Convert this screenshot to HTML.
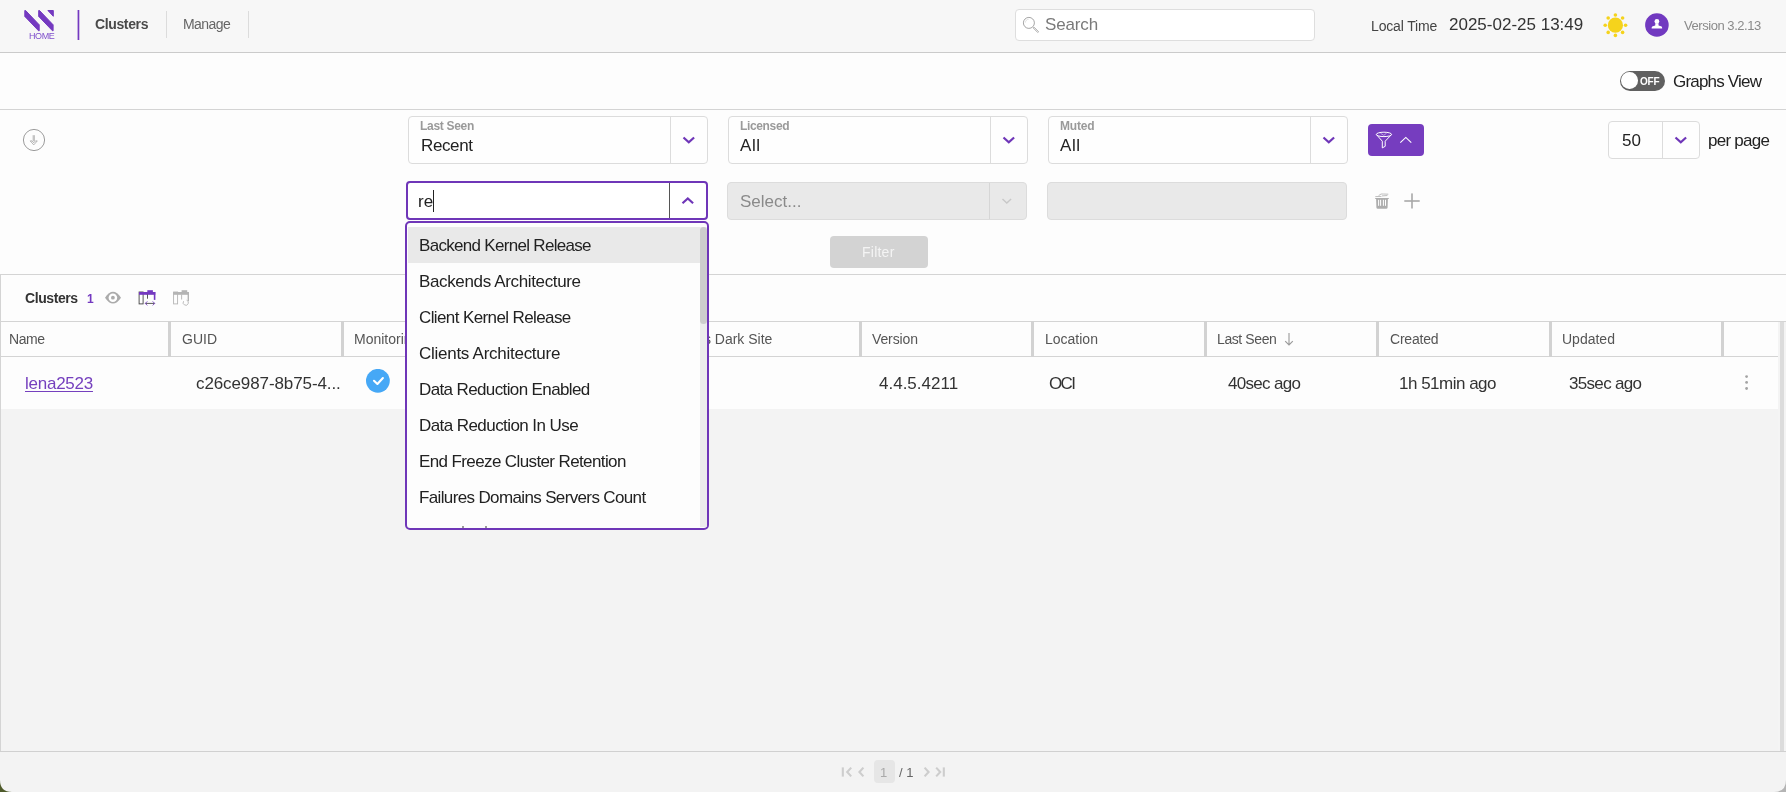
<!DOCTYPE html>
<html><head><meta charset="utf-8">
<style>
*{box-sizing:border-box;margin:0;padding:0}
html,body{width:1786px;height:792px;overflow:hidden;background:#fdfdfd;font-family:"Liberation Sans",sans-serif;color:#222}
.a{position:absolute}
.t{position:absolute;white-space:nowrap;line-height:1;will-change:transform}
#hdr{left:0;top:0;width:1786px;height:53px;background:#f7f7f7;border-bottom:1px solid #cbcbcb}
.hl{height:1px;background:#d4d4d4;left:0;width:1786px}
.sel{border:1px solid #dcdcdc;border-radius:4px;background:#fefefe}
.div{width:1px;background:#dcdcdc}
.lbl{font-weight:bold;color:#9a9a9a}
.opt{left:419px;font-size:17px;color:#222;letter-spacing:-0.68px}
.th{font-size:14px;color:#555;top:332px !important}
.td{font-size:17px;color:#333}
.sep{top:321px;height:36px;width:3px;background:#d2d2d2}
</style></head>
<body>
<!-- HEADER -->
<div id="hdr" class="a"></div>
<svg class="a" style="left:0;top:0" width="100" height="52">
  <g fill="#7439c0" stroke="#7439c0" stroke-width="1" stroke-linejoin="round">
  <polygon points="24.8,10.5 25.6,10.5 39.2,24.8 39.2,30.8 38.6,30.8 24.8,16.4"/>
  <polygon points="38.7,10.5 39.5,10.5 53.1,24.8 53.1,30.8 52.5,30.8 38.7,16.4"/>
  <polygon points="47.9,10.5 53.3,10.5 53.3,16.3"/>
  </g>
  <rect x="77.6" y="10" width="1.7" height="30" fill="#7439c0"/>
</svg>
<div class="t" style="left:29px;top:32px;font-size:9px;color:#7f4fcc;letter-spacing:-0.4px">HOME</div>
<div class="t" style="left:95px;top:17px;font-size:14px;font-weight:bold;color:#4a4a4a;letter-spacing:-0.37px">Clusters</div>
<div class="a" style="left:166px;top:11px;width:1px;height:27px;background:#dcdcdc"></div>
<div class="t" style="left:183px;top:17px;font-size:14px;color:#666;letter-spacing:-0.58px">Manage</div>
<div class="a" style="left:248px;top:11px;width:1px;height:27px;background:#dcdcdc"></div>

<div class="a" style="left:1015px;top:9px;width:300px;height:32px;background:#fff;border:1px solid #dedede;border-radius:4px"></div>
<svg class="a" style="left:1022px;top:16px" width="18" height="18" viewBox="0 0 18 18">
  <circle cx="6.9" cy="6.9" r="5.5" fill="none" stroke="#a6a6a6" stroke-width="1"/>
  <path d="M3.4 6.4 A3.6 3.6 0 0 1 6.6 3.2" fill="none" stroke="#c4c4c4" stroke-width="0.8" stroke-dasharray="1 0.8"/>
  <path d="M11.2 11.9 L12 11.1 L16.4 15.5 Q16.6 16.2 15.7 16.5 Z" fill="none" stroke="#a6a6a6" stroke-width="0.9" stroke-linejoin="round"/>
</svg>
<div class="t" style="left:1045px;top:16px;font-size:17px;color:#7a7a7a;letter-spacing:-0.15px">Search</div>

<div class="t" style="left:1371px;top:19px;font-size:14px;color:#444;letter-spacing:-0.15px">Local Time</div>
<div class="t" style="left:1449px;top:16px;font-size:17px;color:#333">2025-02-25 13:49</div>

<svg class="a" style="left:1600px;top:10px" width="32" height="32" viewBox="0 0 32 32">
  <circle cx="15.4" cy="15.2" r="7.6" fill="#f5d31c"/>
  <g fill="#f5d31c">
   <circle cx="15.4" cy="5" r="1.8"/><circle cx="15.4" cy="25.4" r="1.8"/>
   <circle cx="5.2" cy="15.2" r="1.8"/><circle cx="25.6" cy="15.2" r="1.8"/>
   <circle cx="8.2" cy="8" r="1.8"/><circle cx="22.6" cy="8" r="1.8"/>
   <circle cx="8.2" cy="22.4" r="1.8"/><circle cx="22.6" cy="22.4" r="1.8"/>
  </g>
</svg>
<svg class="a" style="left:1641px;top:9px" width="32" height="32" viewBox="0 0 32 32">
  <circle cx="15.9" cy="16" r="11.8" fill="#7139c0"/>
  <circle cx="15.9" cy="12.4" r="2.4" fill="#fff"/>
  <path d="M14.4 14.2 L17.4 14.2 L17.6 16.6 L20.6 17.6 Q21.2 18 21.2 19.6 L10.6 19.6 Q10.6 18 11.2 17.6 L14.2 16.6 Z" fill="#fff"/>
</svg>
<div class="t" style="left:1684px;top:19px;font-size:13px;color:#8a8a8a;letter-spacing:-0.45px">Version 3.2.13</div>

<!-- TOOLBAR -->
<div class="a" style="left:1620px;top:71px;width:45px;height:20px;border-radius:10px;background:#606060"></div>
<div class="a" style="left:1621.4px;top:72.4px;width:16.6px;height:16.6px;border-radius:50%;background:#fff"></div>
<div class="t" style="left:1640px;top:77px;font-size:10px;font-weight:bold;color:#fff;letter-spacing:-0.2px">OFF</div>
<div class="t" style="left:1673px;top:73px;font-size:17px;color:#222;letter-spacing:-0.8px">Graphs View</div>
<div class="a hl" style="top:109px"></div>

<!-- FILTERS -->

<!-- download icon -->
<svg class="a" style="left:22px;top:128px" width="24" height="24" viewBox="0 0 24 24">
  <circle cx="12" cy="12" r="10.6" fill="none" stroke="#9c9c9c" stroke-width="1"/>
  <rect x="10.6" y="7.2" width="2.4" height="6" fill="#c4c4c4"/><path d="M8.2 12.9 L11.75 16.9 L15.3 12.9 L13.5 12.9 L11.75 14.8 L10 12.9 Z" fill="none" stroke="#a4a4a4" stroke-width="0.8" stroke-linejoin="round"/>
</svg>
<!-- Last Seen select -->
<div class="a sel" style="left:408px;top:116px;width:300px;height:48px"></div>
<div class="a div" style="left:670px;top:117px;height:46px"></div>
<div class="t lbl" style="left:420px;top:120px;font-size:12px;letter-spacing:-0.3px">Last Seen</div>
<div class="t" style="left:421px;top:137px;font-size:17px;color:#222;letter-spacing:-0.38px">Recent</div>
<svg class="a" style="left:680px;top:134px" width="18" height="12" viewBox="0 0 18 12"><path d="M3.5 3.5 L8.8 8.3 L14.1 3.5" fill="none" stroke="#6f36b8" stroke-width="2.2"/></svg>
<!-- Licensed select -->
<div class="a sel" style="left:728px;top:116px;width:300px;height:48px"></div>
<div class="a div" style="left:990px;top:117px;height:46px"></div>
<div class="t lbl" style="left:740px;top:120px;font-size:12px;letter-spacing:-0.35px">Licensed</div>
<div class="t" style="left:740px;top:137px;font-size:17px;color:#222;letter-spacing:0.6px">All</div>
<svg class="a" style="left:1000px;top:134px" width="18" height="12" viewBox="0 0 18 12"><path d="M3.5 3.5 L8.8 8.3 L14.1 3.5" fill="none" stroke="#6f36b8" stroke-width="2.2"/></svg>
<!-- Muted select -->
<div class="a sel" style="left:1048px;top:116px;width:300px;height:48px"></div>
<div class="a div" style="left:1310px;top:117px;height:46px"></div>
<div class="t lbl" style="left:1060px;top:120px;font-size:12px;letter-spacing:-0.2px">Muted</div>
<div class="t" style="left:1060px;top:137px;font-size:17px;color:#222;letter-spacing:0.6px">All</div>
<svg class="a" style="left:1320px;top:134px" width="18" height="12" viewBox="0 0 18 12"><path d="M3.5 3.5 L8.8 8.3 L14.1 3.5" fill="none" stroke="#6f36b8" stroke-width="2.2"/></svg>
<!-- filter button -->
<div class="a" style="left:1368px;top:124px;width:56px;height:32px;border-radius:4px;background:#763dbf"></div>
<svg class="a" style="left:1368px;top:124px" width="56" height="32" viewBox="0 0 56 32">
  <ellipse cx="15.95" cy="10.4" rx="7.6" ry="2.2" fill="none" stroke="#fff" stroke-width="1"/>
  <path d="M18.6 9.2 L15.8 11.3 L12.6 9.4" fill="none" stroke="#d9c8f0" stroke-width="0.7"/>
  <path d="M8.4 10.6 L14.3 17.2 L14.3 23.9 L17.2 22.3 L17.2 17.2 L23.5 10.6" fill="none" stroke="#fff" stroke-width="1" stroke-linejoin="round"/>
  <path d="M32.3 18.7 L37.8 13.4 L43.3 18.7" fill="none" stroke="#fff" stroke-width="1.1"/>
</svg>
<!-- per page -->
<div class="a sel" style="left:1608px;top:121px;width:92px;height:38px"></div>
<div class="a div" style="left:1662px;top:122px;height:36px"></div>
<div class="t" style="left:1622px;top:132px;font-size:17px;color:#222">50</div>
<svg class="a" style="left:1672px;top:134px" width="18" height="12" viewBox="0 0 18 12"><path d="M3.5 3.5 L8.8 8.3 L14.1 3.5" fill="none" stroke="#6f36b8" stroke-width="2.2"/></svg>
<div class="t" style="left:1708px;top:132px;font-size:17px;color:#222;letter-spacing:-0.75px">per page</div>

<!-- row 2 -->
<div class="a" style="left:406px;top:181px;width:302px;height:39px;border:2px solid #6f36b8;border-radius:4px;background:#fff"></div>
<div class="a" style="left:669px;top:183px;width:1px;height:35px;background:#555"></div>
<div class="t" style="left:418px;top:193px;font-size:17px;color:#222">re</div>
<div class="a" style="left:433px;top:190px;width:1px;height:22px;background:#222"></div>
<svg class="a" style="left:679px;top:195px" width="18" height="12" viewBox="0 0 18 12"><path d="M3.5 8.3 L8.8 3.5 L14.1 8.3" fill="none" stroke="#6f36b8" stroke-width="2.2"/></svg>

<div class="a" style="left:727px;top:182px;width:300px;height:38px;border:1px solid #dcdcdc;border-radius:4px;background:#e9e9e9"></div>
<div class="a" style="left:989px;top:183px;width:1px;height:36px;background:#d6d6d6"></div>
<div class="t" style="left:740px;top:193px;font-size:17px;color:#8a8a8a">Select...</div>
<svg class="a" style="left:998px;top:195px" width="18" height="12" viewBox="0 0 18 12"><path d="M4.5 4 L8.8 8 L13.1 4" fill="none" stroke="#c8c8c8" stroke-width="1.4"/></svg>
<div class="a" style="left:1047px;top:182px;width:300px;height:38px;border:1px solid #dcdcdc;border-radius:4px;background:#e9e9e9"></div>
<svg class="a" style="left:1372px;top:191px" width="20" height="20" viewBox="0 0 20 20">
  <path d="M3.2 7 H16.8 V8 H15.9 L15.6 16.6 Q15.5 17.8 14.3 17.8 H5.7 Q4.5 17.8 4.4 16.6 L4.1 8 H3.2 Z" fill="#adadad"/>
  <rect x="6.1" y="8.8" width="1" height="6" fill="#fff"/><rect x="8.1" y="8.8" width="1" height="6" fill="#fff"/><rect x="10.9" y="8.8" width="1" height="6" fill="#fff"/><rect x="13" y="8.8" width="1" height="6" fill="#fff"/>
  <path d="M3.3 5.6 L9.5 5.4 M6.6 4.6 Q9 2.3 11.5 3 L16.3 3.2 M10 4.9 L15.4 4.5" fill="none" stroke="#b8b8b8" stroke-width="0.9"/>
</svg>
<svg class="a" style="left:1402px;top:191px" width="20" height="20" viewBox="0 0 20 20">
  <rect x="9.2" y="2.4" width="1.6" height="15.1" fill="#a8a8a8"/><rect x="2.3" y="9.2" width="15.4" height="1.6" fill="#a8a8a8"/>
</svg>
<div class="a" style="left:830px;top:236px;width:98px;height:32px;border-radius:4px;background:#d3d3d3"></div>
<div class="t" style="left:862px;top:245px;font-size:14px;color:#f4f4f4;letter-spacing:0.24px">Filter</div>


<div class="a hl" style="top:274px"></div>

<!-- TABLE -->

<!-- table frame -->
<div class="a" style="left:0;top:275px;width:1px;height:477px;background:#d4d4d4"></div>
<div class="t" style="left:25px;top:291px;font-size:14px;font-weight:bold;color:#333;letter-spacing:-0.41px">Clusters</div>
<div class="t" style="left:87px;top:293px;font-size:12px;font-weight:bold;color:#7439c0">1</div>
<svg class="a" style="left:104px;top:289px" width="18" height="17" viewBox="0 0 18 17">
  <path d="M1 8.7 Q9 -3 17 8.7 Q9 20.4 1 8.7 Z" fill="#ababab"/>
  <circle cx="8.9" cy="8.7" r="4.3" fill="#fff"/><circle cx="8.9" cy="8.7" r="1.9" fill="#ababab"/>
</svg>
<svg class="a" style="left:137px;top:288px" width="20" height="20" viewBox="0 0 20 20">
  <rect x="2.1" y="4" width="4" height="11.9" fill="none" stroke="#444" stroke-width="0.9"/>
  <rect x="2" y="4" width="8.5" height="2.8" fill="#7439c0"/>
  <rect x="10.3" y="2.2" width="5.6" height="2.2" fill="#7439c0"/>
  <rect x="9.7" y="4" width="8.6" height="2.8" fill="#7439c0"/>
  <rect x="16.8" y="4" width="1.6" height="7.9" fill="#7439c0"/>
  <rect x="10" y="6.5" width="0.9" height="4.2" fill="#444"/>
  <path d="M8.4 15.4 H17.6" stroke="#444" stroke-width="0.9"/>
  <path d="M10.3 13.4 L8.3 15.4 L10.3 17.4 M15.7 13.4 L17.7 15.4 L15.7 17.4" fill="none" stroke="#7439c0" stroke-width="0.9"/>
</svg>
<svg class="a" style="left:171px;top:288px" width="20" height="20" viewBox="0 0 20 20">
  <rect x="2.6" y="4" width="4" height="11.9" fill="none" stroke="#b4b4b4" stroke-width="0.9"/>
  <rect x="2.2" y="4" width="15.6" height="2.8" fill="#b4b4b4"/>
  <rect x="10.6" y="2.2" width="5.6" height="2.2" fill="#b4b4b4"/>
  <rect x="16.6" y="4" width="1.4" height="9" fill="#b4b4b4"/>
  <rect x="10.2" y="6.5" width="0.9" height="5" fill="#b4b4b4"/>
  <path d="M12.6 13.2 A2.6 2.6 0 1 0 15.6 12.2" fill="none" stroke="#b4b4b4" stroke-width="0.9"/>
</svg>

<div class="a" style="left:1px;top:321px;width:1785px;height:1px;background:#d4d4d4"></div>
<div class="a" style="left:1px;top:356px;width:1777px;height:1px;background:#d4d4d4"></div>
<div class="a sep" style="left:168px"></div><div class="a sep" style="left:341px"></div><div class="a sep" style="left:513px"></div><div class="a sep" style="left:686px"></div><div class="a sep" style="left:859px"></div><div class="a sep" style="left:1031px"></div><div class="a sep" style="left:1204px"></div><div class="a sep" style="left:1376px"></div><div class="a sep" style="left:1549px"></div><div class="a sep" style="left:1721px"></div>
<div class="t th" style="left:9px;top:333px;letter-spacing:-0.43px">Name</div>
<div class="t th" style="left:182px;top:333px">GUID</div>
<div class="t th" style="left:354px;top:333px">Monitoring</div>
<div class="t th" style="left:700px;top:333px">Is Dark Site</div>
<div class="t th" style="left:872px;top:333px;letter-spacing:-0.12px">Version</div>
<div class="t th" style="left:1045px;top:333px">Location</div>
<div class="t th" style="left:1217px;top:333px;letter-spacing:-0.4px">Last Seen</div>
<svg class="a" style="left:1282px;top:331px" width="14" height="16" viewBox="0 0 14 16"><path d="M7 2 V14 M3.2 10.2 L7 14 L10.8 10.2" fill="none" stroke="#9a9a9a" stroke-width="1.1"/></svg>
<div class="t th" style="left:1390px;top:333px;letter-spacing:-0.2px">Created</div>
<div class="t th" style="left:1562px;top:333px">Updated</div>

<!-- data row -->
<div class="a" style="left:1px;top:357px;width:1777px;height:52px;background:#fdfdfd"></div>
<div class="a" style="left:1px;top:409px;width:1777px;height:342px;background:#f3f3f3"></div>
<div class="t td" style="left:25px;top:375px;color:#7540be;letter-spacing:-0.25px;text-decoration:underline;text-underline-offset:2px">lena2523</div>
<div class="t td" style="left:196px;top:375px;letter-spacing:-0.1px">c26ce987-8b75-4...</div>
<svg class="a" style="left:365px;top:369px" width="26" height="26" viewBox="0 0 26 26">
  <circle cx="12.9" cy="11.8" r="11.9" fill="#46a8f6"/>
  <path d="M9 11.8 L12.4 15 L17.9 9" fill="none" stroke="#fff" stroke-width="2.1" stroke-linecap="round" stroke-linejoin="round"/>
</svg>
<div class="t td" style="left:879px;top:375px">4.4.5.4211</div>
<div class="t td" style="left:1049px;top:375px;letter-spacing:-1.6px">OCI</div>
<div class="t td" style="left:1228px;top:375px;letter-spacing:-0.7px">40sec ago</div>
<div class="t td" style="left:1399px;top:375px;letter-spacing:-0.5px">1h 51min ago</div>
<div class="t td" style="left:1569px;top:375px;letter-spacing:-0.68px">35sec ago</div>
<svg class="a" style="left:1740px;top:372px" width="14" height="20" viewBox="0 0 14 20">
  <circle cx="6.6" cy="4.6" r="1.4" fill="#a4a4a4"/><circle cx="6.6" cy="10.4" r="1.4" fill="#a4a4a4"/><circle cx="6.6" cy="16.5" r="1.4" fill="#a4a4a4"/>
</svg>
<!-- vertical scrollbar -->
<div class="a" style="left:1778px;top:322px;width:8px;height:429px;background:#f4f4f4"></div><div class="a" style="left:1780px;top:322px;width:4px;height:429px;background:#dcdcdc"></div>

<div class="a" style="left:0;top:751px;width:1786px;height:1px;background:#d0d0d0"></div>
<div class="a" style="left:0;top:752px;width:1786px;height:40px;background:#f3f3f3"></div>

<!-- pagination -->
<svg class="a" style="left:838px;top:762px" width="112" height="20" viewBox="0 0 112 20">
  <g fill="none" stroke="#cdcdcd" stroke-width="2.1">
   <path d="M4.8 5.4 V14.6"/><path d="M13.2 5.6 L9.2 10 L13.2 14.4"/>
   <path d="M25.4 5.6 L21.4 10 L25.4 14.4"/>
   <path d="M86.6 5.6 L90.6 10 L86.6 14.4"/>
   <path d="M98.2 5.6 L102.2 10 L98.2 14.4"/><path d="M105.8 5.4 V14.6"/>
  </g>
</svg>
<div class="a" style="left:874px;top:760px;width:21px;height:23px;border-radius:4px;background:#e6e6e6"></div>
<div class="t" style="left:880px;top:766px;font-size:13px;color:#aaa">1</div>
<div class="t" style="left:899px;top:766px;font-size:13px;color:#666">/ 1</div>

<!-- window corners -->
<svg class="a" style="left:0;top:780px" width="12" height="12" viewBox="0 0 12 12"><path d="M0 0 Q0 12 12 12 H0 Z" fill="#4e5a2a"/></svg>
<svg class="a" style="left:1774px;top:780px" width="12" height="12" viewBox="0 0 12 12"><path d="M12 0 Q12 12 0 12 H12 Z" fill="#b4b4b4"/></svg>

<!-- DROPDOWN MENU -->
<div class="a" style="left:405px;top:221px;width:304px;height:309px;border:2px solid #6f36b8;border-radius:5px;background:#fdfdfd;overflow:hidden">
  <div class="a" style="left:1px;top:4px;width:292px;height:36px;background:#e9e9e9"></div>
  <div class="a" style="left:293px;top:4px;width:7px;height:300px;background:#ececec"></div>
  <div class="a" style="left:293px;top:4px;width:7px;height:97px;border-radius:4px;background:#cdcdcd"></div>
  <div class="t" style="left:12.4px;top:14px;font-size:17px;color:#222;letter-spacing:-0.695px">Backend Kernel Release</div>
  <div class="t" style="left:12.4px;top:50px;font-size:17px;color:#222;letter-spacing:-0.355px">Backends Architecture</div>
  <div class="t" style="left:12.4px;top:86px;font-size:17px;color:#222;letter-spacing:-0.605px">Client Kernel Release</div>
  <div class="t" style="left:12.4px;top:122px;font-size:17px;color:#222;letter-spacing:-0.268px">Clients Architecture</div>
  <div class="t" style="left:12.4px;top:158px;font-size:17px;color:#222;letter-spacing:-0.619px">Data Reduction Enabled</div>
  <div class="t" style="left:12.4px;top:194px;font-size:17px;color:#222;letter-spacing:-0.57px">Data Reduction In Use</div>
  <div class="t" style="left:12.4px;top:230px;font-size:17px;color:#222;letter-spacing:-0.615px">End Freeze Cluster Retention</div>
  <div class="t" style="left:12.4px;top:266px;font-size:17px;color:#222;letter-spacing:-0.638px">Failures Domains Servers Count</div>
  <div class="a" style="left:55px;top:303px;width:2px;height:2px;background:#999"></div>
  <div class="a" style="left:78px;top:303px;width:2px;height:2px;background:#999"></div>
</div>
</body></html>
